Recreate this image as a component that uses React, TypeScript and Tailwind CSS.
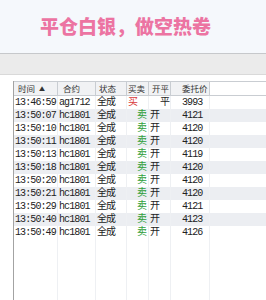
import React from "react";

const cols = "grid grid-cols-[44px_38px_31px_22px_22px_39px_1fr]";

const rows = [
  { t: "13:46:59", c: "ag1712", bs: "买", oc: "平", p: "3993" },
  { t: "13:50:07", c: "hc1801", bs: "卖", oc: "开", p: "4121" },
  { t: "13:50:10", c: "hc1801", bs: "卖", oc: "开", p: "4120" },
  { t: "13:50:11", c: "hc1801", bs: "卖", oc: "开", p: "4120" },
  { t: "13:50:13", c: "hc1801", bs: "卖", oc: "开", p: "4119" },
  { t: "13:50:18", c: "hc1801", bs: "卖", oc: "开", p: "4120" },
  { t: "13:50:20", c: "hc1801", bs: "卖", oc: "开", p: "4120" },
  { t: "13:50:21", c: "hc1801", bs: "卖", oc: "开", p: "4120" },
  { t: "13:50:29", c: "hc1801", bs: "卖", oc: "开", p: "4121" },
  { t: "13:50:40", c: "hc1801", bs: "卖", oc: "开", p: "4123" },
  { t: "13:50:49", c: "hc1801", bs: "卖", oc: "开", p: "4126" },
];

const mono = { fontFamily: '"Liberation Mono", "Noto Sans CJK SC", monospace' };
const cell = "border-r border-[#eef0f3] whitespace-nowrap overflow-hidden";
const head = "bg-[#f1f2f4] border-r border-[#c9cdd2] whitespace-nowrap overflow-hidden";

export default function App() {
  return (
    <div className="w-[266px] h-[300px] overflow-hidden bg-white flex flex-col">
      {/* banner */}
      <div className="h-[53px] shrink-0 bg-[#f5f8fc] flex items-center pl-[40px] pb-[3px]">
        <span
          className="text-[19px] font-black text-[#ec74a2] leading-none"
          style={{ fontFamily: '"Noto Sans CJK SC", sans-serif' }}
        >
          平仓白银，做空热卷
        </span>
      </div>

      {/* toolbar strip */}
      <div className="h-[22px] shrink-0 bg-[#ebebeb] border-t border-[#c6c8cb] border-b border-b-[#d9d9d9]" />

      {/* order list */}
      <div className="flex-1 pl-[13px] pt-[6px] flex flex-col">
        <div className="flex-1 border-l border-[#a3a3a3] flex flex-col">
          {/* header */}
          <div
            className={`${cols} h-[15px] border-t border-b border-[#c9cdd2] text-[8.5px] text-[#333] leading-[13px]`}
            style={{ fontFamily: '"Noto Sans CJK SC", sans-serif' }}
          >
            <div className={`${head} pl-[4px] flex items-center gap-[4px]`}>
              时间<span className="text-[6px]">▲</span>
            </div>
            <div className={`${head} pl-[5px]`}>合约</div>
            <div className={`${head} pl-[3px]`}>状态</div>
            <div className={`${head} pl-[1px]`}>买卖</div>
            <div className={`${head} pl-[3px]`}>开平</div>
            <div className={`${head} pl-[11px]`}>委托价</div>
            <div />
          </div>

          {/* rows */}
          {rows.map((r, i) => (
            <div
              key={i}
              className={`${cols} h-[13px] text-[10px] tracking-[-0.9px] text-[#222] leading-[13px] ${
                i % 2 === 1 ? "bg-[#eceef2]" : "bg-white"
              }`}
              style={mono}
            >
              <div className={`${cell} pl-[1px]`}>{r.t}</div>
              <div className={`${cell} pl-[1px]`}>{r.c}</div>
              <div className={`${cell} pl-[1px]`}>全成</div>
              <div
                className={`${cell} ${
                  r.bs === "买" ? "pl-[1px] text-[#d9383a]" : "pl-[10px] text-[#2f9e3a]"
                }`}
              >
                {r.bs}
              </div>
              <div className={`${cell} ${r.oc === "平" ? "pl-[11px]" : "pl-[1px]"}`}>{r.oc}</div>
              <div className={`${cell} pl-[11px]`}>{r.p}</div>
              <div />
            </div>
          ))}

          {/* empty body */}
          <div className={`${cols} flex-1`}>
            <div className={cell} />
            <div className={cell} />
            <div className={cell} />
            <div className={cell} />
            <div className={cell} />
            <div className={cell} />
            <div />
          </div>
        </div>
      </div>
    </div>
  );
}
